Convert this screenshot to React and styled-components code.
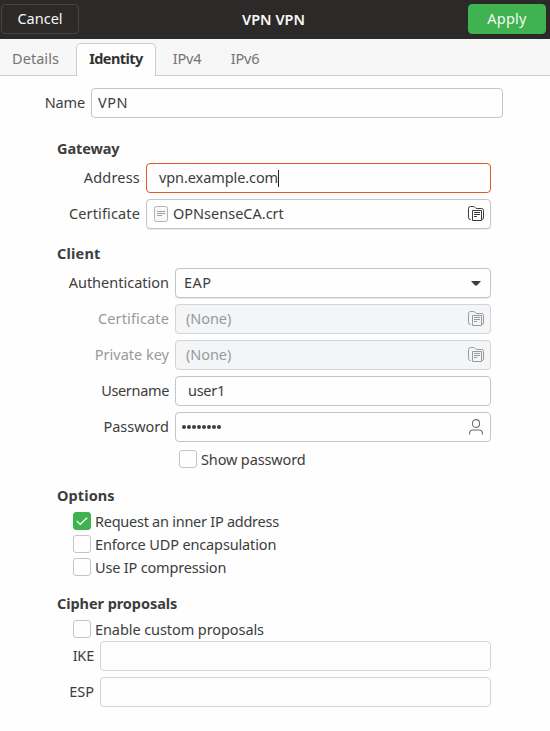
import React from "react";
import styled, { createGlobalStyle, css } from "styled-components";

const GlobalStyle = createGlobalStyle`
  * { box-sizing: border-box; }
  body { margin: 0; background: #fefefe; }
`;

const Window = styled.div`
  width: 550px;
  height: 731px;
  overflow: hidden;
  background: #fefefe;
  color: #3d3d3d;
  font: 14.5px/20px "Noto Sans", "Open Sans", sans-serif;
  white-space: nowrap;
`;

const Text = styled.span`
  letter-spacing: ${(p) => p.$ls || 0}px;
`;

const HeaderBar = styled.header`
  display: flex;
  align-items: center;
  justify-content: space-between;
  height: 39px;
  padding: 0 4px 1px 1px;
  background: #2c2929;
  color: #f7f7f7;
`;

const HeaderButton = styled.button`
  width: 78px;
  height: 30px;
  padding: 0 0 2px;
  border: 1px solid ${(p) => (p.$primary ? "#3eb34f" : "#464444")};
  border-radius: 4px;
  background: ${(p) => (p.$primary ? "#3eb34f" : "transparent")};
  color: inherit;
  font: inherit;
`;

const Title = styled.h1`
  margin: 0;
  font-size: 14.5px;
  font-weight: 600;
`;

const TabBar = styled.nav`
  display: flex;
  align-items: flex-end;
  height: 37px;
  background: #f7f7f7;
  box-shadow: inset 0 -1px #cdcdcf;
`;

const Tab = styled.div`
  width: ${(p) => p.$width}px;
  height: 33px;
  padding-top: 5px;
  text-align: center;
  color: #747474;
  ${(p) =>
    p.$active &&
    css`
      margin-left: 5px;
      border: 1px solid #cdcdcf;
      border-bottom: 0;
      border-radius: 5px 5px 0 0;
      padding-top: 4px;
      background: #fefefe;
      color: #333;
      font-weight: 700;
    `}
`;

const Form = styled.main`
  padding: 12px 59px 0 57px;
`;

const NameRow = styled.div`
  display: grid;
  grid-template-columns: 28px 412px;
  justify-content: start;
  gap: 6px;
  height: 30px;
`;

const Section = styled.section`
  padding-top: ${(p) => p.$top}px;
`;

const Heading = styled.h2`
  margin: 0 0 ${(p) => p.$gap}px;
  height: 20px;
  font-size: 14.5px;
  line-height: 20px;
  font-weight: 700;
`;

const Fields = styled.div`
  display: grid;
  grid-template-columns: ${(p) => p.$label}px minmax(0, 1fr);
  gap: 6px;
  width: 434px;
  margin-top: ${(p) => p.$shift || 0}px;
`;

const Label = styled.label`
  display: flex;
  justify-content: flex-end;
  align-items: center;
  height: 30px;
  padding-bottom: 2px;
  color: ${(p) => (p.$disabled ? "#989a9a" : "inherit")};
`;

const Field = styled.div`
  display: flex;
  align-items: center;
  height: 30px;
  padding: 0 6px 0 ${(p) => p.$inset || 6}px;
  border: 1px solid ${(p) => (p.$focused ? "#e95420" : p.$disabled ? "#d0d3d8" : p.$faint ? "#d2d4d9" : "#c2c5cb")};
  border-radius: 4px;
  background: ${(p) => (p.$disabled ? "#f4f5f7" : "#fefefe")};
  color: ${(p) => (p.$disabled ? "#989a9a" : "inherit")};
  ${(p) => p.$raised && css`box-shadow: 0 1px #e9eaec;`}

  > ${Text} { padding-bottom: 2px; }
  > svg:last-child { margin-left: auto; }
`;

const Caret = styled.span`
  width: 1px;
  height: 17px;
  background: #222;
`;

const Dots = styled.span`
  display: flex;
  gap: 1px;
`;

const Dot = styled.i`
  width: 4px;
  height: 4px;
  border-radius: 50%;
  background: #3d3d3d;
`;

const CheckRow = styled.label`
  display: flex;
  align-items: center;
  gap: 4px;
  height: 18px;
  margin: 0 0 5px ${(p) => p.$left}px;
`;

const Box = styled.span`
  display: grid;
  place-items: center;
  width: 18px;
  height: 18px;
  border: 1px solid ${(p) => (p.$checked ? "#3eb34f" : "#c2c5cb")};
  border-radius: 3px;
  background: ${(p) => (p.$checked ? "#3eb34f" : "#fefefe")};
`;

const FileLead = styled.svg`
  margin-right: 5px;
`;

function DocumentIcon() {
  return (
    <FileLead width="14" height="16" viewBox="0 0 14 16" fill="none">
      <rect x=".5" y=".5" width="13" height="15" rx="2" fill="#f7f7f7" stroke="#b4b4b4" />
      <path d="M3 5.5h8M3 7.5h8M3 9.5h5" stroke="#a2a2a2" />
    </FileLead>
  );
}

function FolderIcon() {
  return (
    <svg width="16" height="16" viewBox="0 0 16 16" fill="none" stroke="currentColor">
      <path d="M2.9 13.5H2.5Q.5 13.5.5 11.5v-9Q.5.5 2.5.5h3Q6.6.5 7.2 1.5T9 2.5h4.5q2 0 2 2V12q0 1-1.5 1.5" />
      <path d="M4.5 4.5h9v10h-9zM6 6.5h6M6 8.5h6M6 10.5h3" />
    </svg>
  );
}

function UserIcon() {
  return (
    <svg width="16" height="16" viewBox="0 0 16 16" fill="none" stroke="#6d6d6d" strokeWidth="1.1">
      <rect x="4.5" y=".6" width="7" height="7.8" rx="3.4" />
      <path d="M1.5 15.5v-1q0-3.5 4-3.5h5q4 0 4 3.5v1" />
    </svg>
  );
}

function ArrowIcon() {
  return (
    <svg width="16" height="16" viewBox="0 0 16 16">
      <path d="M3 6h10L9 10.6H7z" fill="#3d3d3d" />
    </svg>
  );
}

function Check({ checked, left = 16, ls, children }) {
  return (
    <CheckRow $left={left}>
      <Box $checked={checked}>
        {checked && (
          <svg width="14" height="14" viewBox="0 0 14 14" fill="none" stroke="#fff" strokeWidth="1.2">
            <path d="M1.7 6.8l3.5 3.5 7-6.6" />
          </svg>
        )}
      </Box>
      <Text $ls={ls}>{children}</Text>
    </CheckRow>
  );
}

export default function App() {
  return (
    <>
      <GlobalStyle />
      <Window>
        <HeaderBar>
          <HeaderButton>Cancel</HeaderButton>
          <Title><Text>VPN VPN</Text></Title>
          <HeaderButton $primary><Text $ls={0.25}>Apply</Text></HeaderButton>
        </HeaderBar>
        <TabBar>
          <Tab $width={71}><Text $ls={0.04}>Details</Text></Tab>
          <Tab $width={80} $active><Text $ls={-0.55}>Identity</Text></Tab>
          <Tab $width={62}><Text $ls={-0.15}>IPv4</Text></Tab>
          <Tab $width={54}><Text $ls={-0.15}>IPv6</Text></Tab>
        </TabBar>
        <Form>
          <NameRow>
            <Label><Text $ls={-0.15}>Name</Text></Label>
            <Field><Text $ls={0.5}>VPN</Text></Field>
          </NameRow>

          <Section $top={20}>
            <Heading $gap={5}><Text $ls={-0.1}>Gateway</Text></Heading>
            <Fields $label={83}>
              <Label><Text $ls={0.2}>Address</Text></Label>
              <Field $focused $inset={12}><Text $ls={-0.09}>vpn.example.com</Text><Caret /></Field>
              <Label><Text $ls={0.14}>Certificate</Text></Label>
              <Field $raised $inset={7}>
                <DocumentIcon />
                <Text>OPNsenseCA.crt</Text>
                <FolderIcon />
              </Field>
            </Fields>
          </Section>

          <Section $top={14}>
            <Heading $gap={5}><Text $ls={0.2}>Client</Text></Heading>
            <Fields $label={112}>
              <Label><Text>Authentication</Text></Label>
              <Field $raised $inset={8}><Text $ls={0.5}>EAP</Text><ArrowIcon /></Field>
              <Label $disabled><Text $ls={0.14}>Certificate</Text></Label>
              <Field $disabled $inset={10}><Text $ls={-0.06}>(None)</Text><FolderIcon /></Field>
              <Label $disabled><Text>Private key</Text></Label>
              <Field $disabled $inset={10}><Text $ls={-0.06}>(None)</Text><FolderIcon /></Field>
              <Label><Text $ls={-0.34}>Username</Text></Label>
              <Field $inset={12}><Text $ls={-0.27}>user1</Text></Field>
              <Label><Text>Password</Text></Label>
              <Field>
                <Dots>{Array.from({ length: 8 }, (_, i) => <Dot key={i} />)}</Dots>
                <UserIcon />
              </Field>
            </Fields>
          </Section>

          <Section $top={8}>
            <Check left={122} ls={-0.14}>Show password</Check>
          </Section>

          <Section $top={12}>
            <Heading $gap={7}><Text $ls={0.1}>Options</Text></Heading>
            <Check checked ls={-0.26}>Request an inner IP address</Check>
            <Check ls={-0.14}>Enforce UDP encapsulation</Check>
            <Check ls={-0.18}>Use IP compression</Check>
          </Section>

          <Section $top={12}>
            <Heading $gap={7}><Text $ls={-0.07}>Cipher proposals</Text></Heading>
            <Check ls={-0.08}>Enable custom proposals</Check>
            <Fields $label={37} $shift={-2}>
              <Label><Text $ls={-0.2}>IKE</Text></Label>
              <Field $faint />
              <Label>ESP</Label>
              <Field $faint />
            </Fields>
          </Section>
        </Form>
      </Window>
    </>
  );
}
